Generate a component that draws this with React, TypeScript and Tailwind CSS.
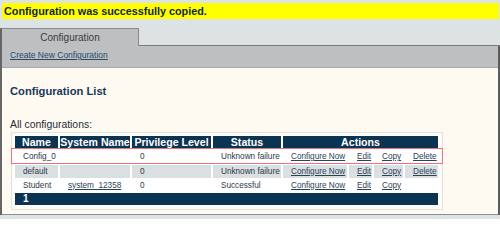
import React from "react";

type Row = {
  name: string;
  system?: string;
  level: string;
  status: string;
  canDelete: boolean;
  shaded?: boolean;
};

const rows: Row[] = [
  { name: "Config_0", level: "0", status: "Unknown failure", canDelete: true },
  { name: "default", level: "0", status: "Unknown failure", canDelete: true, shaded: true },
  { name: "Student", system: "system_12358", level: "0", status: "Successful", canDelete: false },
];

const cols = ["w-[43px]", "w-[70px]", "w-[79px]", "w-[68px]", "w-[64px]", "w-[23px]", "w-[29px]", "w-[33px]"];

export default function App() {
  return (
    <div className="h-[219px] w-[500px] overflow-hidden bg-[#dde2e5] font-['Liberation_Sans',Arial,sans-serif]">
      {/* Flash message */}
      <div className="pl-[2px] pr-[1px] pt-[3px]">
        <div className="h-[16px] whitespace-nowrap bg-[#ffff00] pl-[2px] text-[10.8px] font-bold leading-[16px] text-[#10283c]">
          Configuration was successfully copied.
        </div>
      </div>
      <div className="h-[9px]" />

      {/* Tabs */}
      <div className="flex h-[18px]">
        <div className="w-[139px] border-l-2 border-r border-t border-l-[#666] border-r-[#8a8a8a] border-t-[#8a8a8a] bg-[#bebfc1] pt-[1px] text-center text-[10px] leading-[16px] text-[#3b3b3b]">
          Configuration
        </div>
        <div className="flex-1 border-b border-b-[#7c7c7c]" />
      </div>

      <div className="border-l-2 border-r-2 border-l-[#666] border-r-[#5c5c5c]">
        <div className="h-[22px] border-b border-b-[#a8a9aa] bg-[#bebfc1] pl-[8px] pt-[4px] text-[8.5px] leading-[10px]">
          <a className="text-[#284a68] underline">Create New Configuration</a>
        </div>

        {/* Panel */}
        <div className="h-[147px] border-b border-b-[#8e8e8e] bg-[#fefaf1] pl-[8px]">
          <h1 className="pt-[17px] text-[11.2px] font-bold leading-[13px] text-[#16385a]">Configuration List</h1>
          <p className="mt-[21px] text-[10.4px] leading-[12px] text-[#1f2d3a]">All configurations:</p>

          <div className="relative ml-[1px] mt-[1px] w-[432px] border border-[#dfe3dd] bg-[#fcfbf7] px-[1px] pb-[3px] pt-[2px]">
            <table className="w-[427px] table-fixed border-separate border-spacing-x-[2px] border-spacing-y-[1px] bg-white">
              <colgroup>
                {cols.map((c, i) => (
                  <col key={i} className={c} />
                ))}
              </colgroup>
              <thead>
                <tr className="h-[13px] bg-[#0b3352] text-[10.6px] font-bold leading-[13px] text-white">
                  <th className="overflow-hidden whitespace-nowrap p-0">Name</th>
                  <th className="overflow-hidden whitespace-nowrap p-0">System Name</th>
                  <th className="overflow-hidden whitespace-nowrap p-0">Privilege Level</th>
                  <th className="overflow-hidden whitespace-nowrap p-0">Status</th>
                  <th colSpan={4} className="whitespace-nowrap p-0">Actions</th>
                </tr>
              </thead>
              <tbody className="text-[8.2px] text-[#2b3947]">
                {rows.map((r, i) => (
                  <ConfigRow key={r.name} row={r} tall={i === 0} />
                ))}
                <tr className="h-[12px] bg-[#0b3352]">
                  <td colSpan={8} className="p-0 pl-[8px] text-[10px] font-bold leading-[12px] text-white">1</td>
                </tr>
              </tbody>
            </table>

            {/* highlighted row */}
            <div className="pointer-events-none absolute left-[-1px] top-[15px] h-[16px] w-[432px] border border-[#ea737b]" />
          </div>
        </div>
      </div>
    </div>
  );
}

function ConfigRow({ row, tall }: { row: Row; tall: boolean }) {
  const bg = row.shaded ? "bg-[#dadfe2]" : "bg-white";
  const cell = `${bg} whitespace-nowrap p-0 pl-[8px] leading-[12px] overflow-hidden`;
  const link = "text-[#2a4258] underline";
  return (
    <tr className={tall ? "h-[14px]" : "h-[13px]"}>
      <td className={cell}>{row.name}</td>
      <td className={cell}>{row.system && <a className={link}>{row.system}</a>}</td>
      <td className={cell}>{row.level}</td>
      <td className={cell}>{row.status}</td>
      <td className={cell}><a className={link}>Configure Now</a></td>
      <td className={cell}><a className={link}>Edit</a></td>
      <td className={cell}><a className={link}>Copy</a></td>
      <td className={row.canDelete ? cell : "p-0"}>{row.canDelete && <a className={link}>Delete</a>}</td>
    </tr>
  );
}
